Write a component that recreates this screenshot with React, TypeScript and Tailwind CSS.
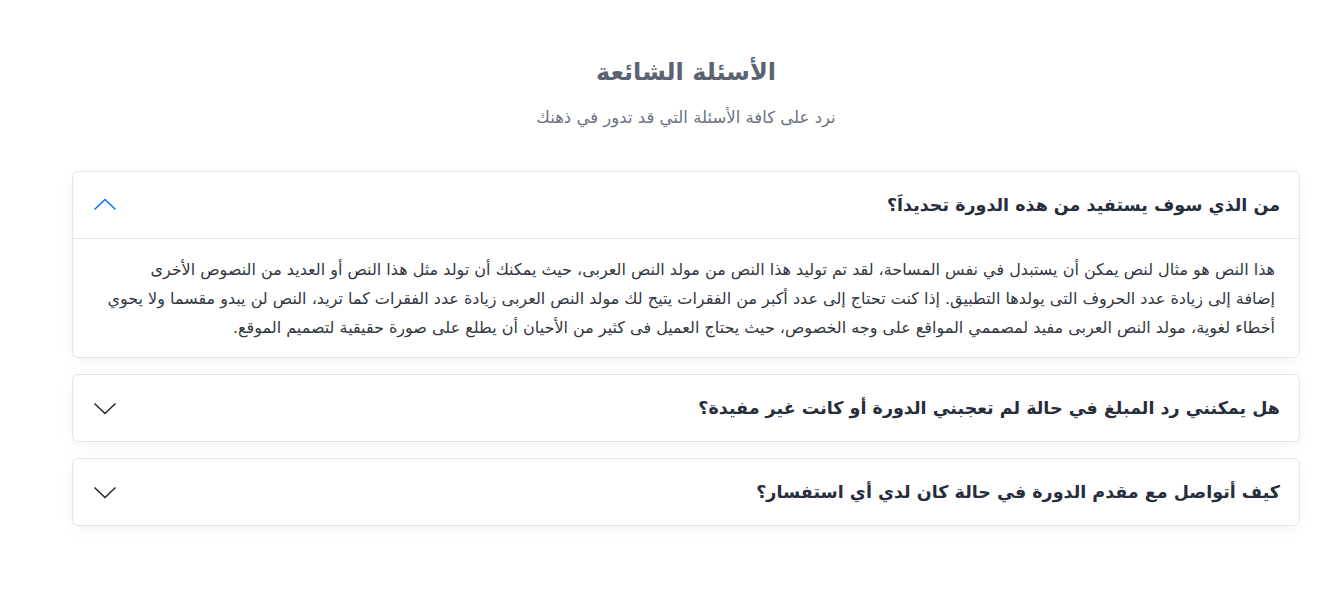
import { useState } from 'react';

const faqs = [
  {
    q: 'من الذي سوف يستفيد من هذه الدورة تحديداَ؟',
    a: [
      'هذا النص هو مثال لنص يمكن أن يستبدل في نفس المساحة، لقد تم توليد هذا النص من مولد النص العربى، حيث يمكنك أن تولد مثل هذا النص أو العديد من النصوص الأخرى',
      'إضافة إلى زيادة عدد الحروف التى يولدها التطبيق. إذا كنت تحتاج إلى عدد أكبر من الفقرات يتيح لك مولد النص العربى زيادة عدد الفقرات كما تريد، النص لن يبدو مقسما ولا يحوي',
      'أخطاء لغوية، مولد النص العربى مفيد لمصممي المواقع على وجه الخصوص، حيث يحتاج العميل فى كثير من الأحيان أن يطلع على صورة حقيقية لتصميم الموقع.',
    ],
  },
  {
    q: 'هل يمكنني رد المبلغ في حالة لم تعجبني الدورة أو كانت غير مفيدة؟',
    a: ['هذا النص هو مثال لنص يمكن أن يستبدل في نفس المساحة.'],
  },
  {
    q: 'كيف أتواصل مع مقدم الدورة في حالة كان لدي أي استفسار؟',
    a: ['هذا النص هو مثال لنص يمكن أن يستبدل في نفس المساحة.'],
  },
];

function Chevron({ open }: { open: boolean }) {
  return (
    <svg
      className={open ? 'w-6 h-6 text-[#0d6efd]' : 'w-6 h-6 text-[#212529]'}
      viewBox="0 0 24 24"
      fill="none"
      stroke="currentColor"
      strokeWidth={1.5}
    >
      {open ? <path d="M1.5 16.5 12 6.5l10.5 10" /> : <path d="M1.5 7.5 12 17.5l10.5-10" />}
    </svg>
  );
}

export default function App() {
  const [open, setOpen] = useState(0);

  return (
    <div dir="rtl" className="min-h-screen bg-white pl-[72px] pr-[39px] pt-[52px] font-['DejaVu_Sans',sans-serif]">
      <div className="text-center">
        <h2 className="text-[24px] font-bold text-[#5c6370] leading-[40px]">الأسئلة الشائعة</h2>
        <p className="mt-[14px] text-[16.5px] leading-[24px] text-[#6c727f]">نرد على كافة الأسئلة التي قد تدور في ذهنك</p>
      </div>

      <div className="mt-[41px] flex flex-col gap-[16px]">
        {faqs.map((f, i) => (
          <div key={i} className="bg-white border border-[#e3e5e8] rounded-[6px] shadow-[0_4px_16px_rgba(0,0,0,0.04)]">
            <button
              onClick={() => setOpen(open === i ? -1 : i)}
              className={
                open === i
                  ? 'w-full h-[67px] flex items-center justify-between pr-[19px] pl-[20px] border-b border-[#e3e5e8]'
                  : 'w-full h-[66px] flex items-center justify-between pr-[19px] pl-[20px]'
              }
            >
              <span className="text-[17.5px] font-bold text-[#272d3a]">{f.q}</span>
              <Chevron open={open === i} />
            </button>
            {open === i && (
              <div className="pr-[24px] pl-[24px] pt-[16px] pb-[15px] text-[16px] leading-[29px] text-[#333740]">
                {f.a.map((line, j) => (
                  <p key={j}>{line}</p>
                ))}
              </div>
            )}
          </div>
        ))}
      </div>
    </div>
  );
}
